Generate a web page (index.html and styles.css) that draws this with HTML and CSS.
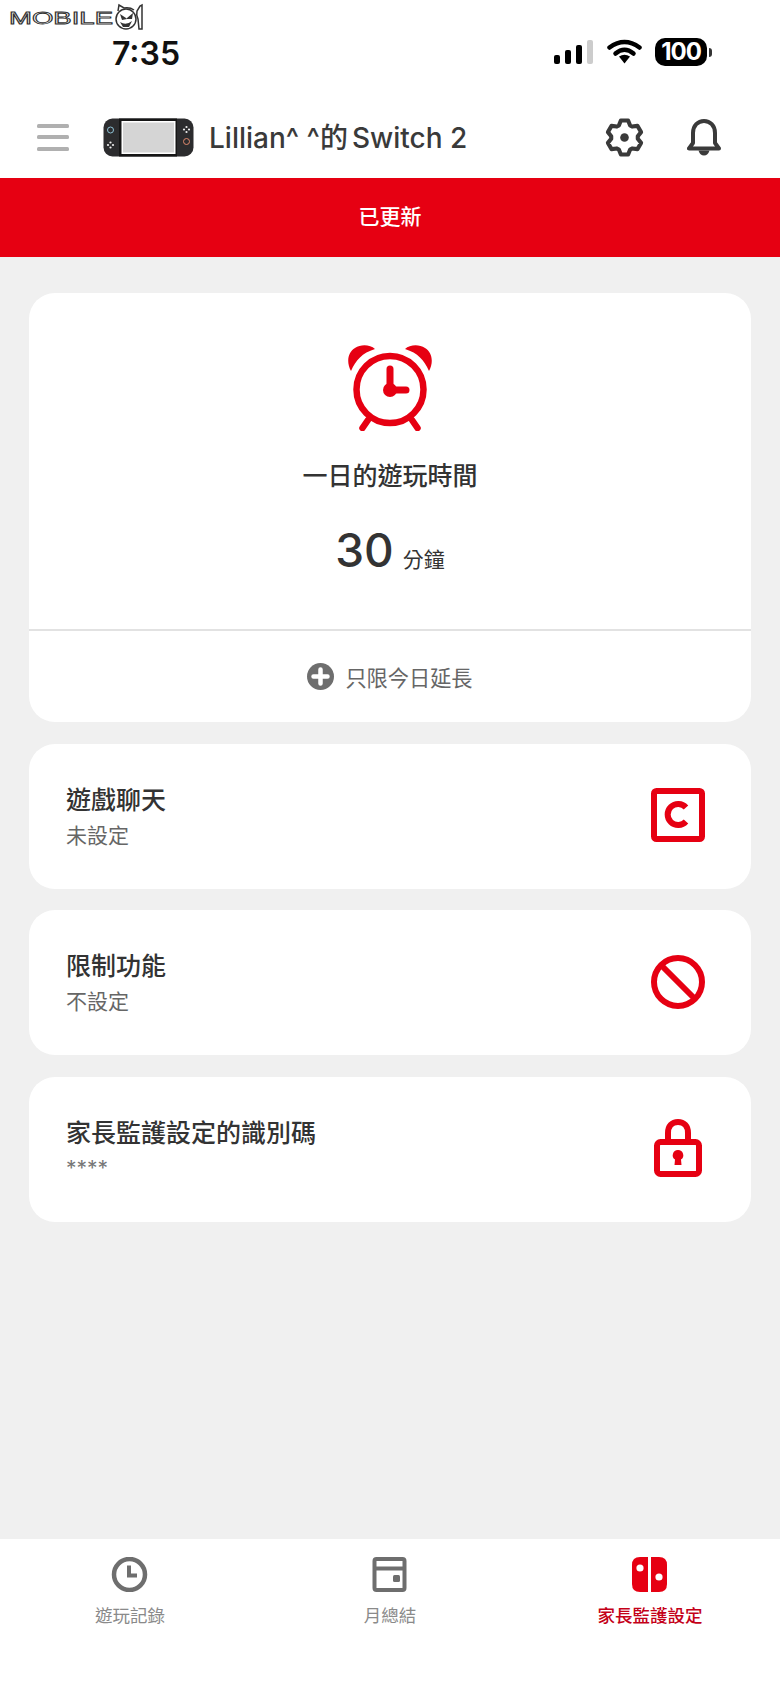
FILE: index.html
```html
<!DOCTYPE html>
<html lang="zh-Hant">
<head>
<meta charset="utf-8">
<title>家長監護設定</title>
<link rel="stylesheet" href="styles.css">
</head>
<body>
<div class="page">
  <svg class="watermark" width="146" height="32" viewBox="0 0 146 32">
    <text class="wm-text" x="9" y="24" textLength="104" lengthAdjust="spacingAndGlyphs">MOBILE</text>
    <path class="wm-line" d="M118 11l1-6 5 3q6-1 10 2M142 5v24h-3l-1-10q-2-4-1-8l3-5z"/>
    <circle class="wm-line" cx="126" cy="19" r="10"/>
    <path class="wm-face" d="M120 14l6 4 1 1-5 1zM133 13l-6 5-1 1 6 0zM120 22q6 4 12-1l-3 6h-6z"/>
  </svg>

  <div class="status">
    <span class="time">7:35</span>
    <div class="status-right">
      <div class="signal"><i class="b1"></i><i class="b2"></i><i class="b3"></i><i class="b4"></i></div>
      <svg class="wifi" width="35" height="25" viewBox="0 0 35 25">
        <path d="M2.5 8.5Q17.5-2.5 32.500 8.500" class="wifi-arc"/>
        <path d="M8.500 14.500Q17.500 7 26.500 14.500" class="wifi-arc"/>
        <path d="M12 17.500Q17.500 14 23 17.500L17.500 24.500Z" class="wifi-dot"/>
      </svg>
      <div class="battery"><span class="battery-body">100</span><span class="battery-nub"></span></div>
    </div>
  </div>

  <header class="header">
    <div class="burger"><i></i><i></i><i></i></div>
    <svg class="console" width="91" height="39" viewBox="0 0 91 39">
      <rect x="0.500" y="0.500" width="90" height="38" rx="9" fill="#2c2c2e"/>
      <rect x="16" y="0.500" width="58" height="38" fill="#161616"/>
      <rect x="18.500" y="3" width="54" height="33" fill="#fff"/>
      <rect x="20" y="4.500" width="51" height="30" fill="#d5d5d5"/>
      <circle cx="7.500" cy="12" r="3" fill="none" stroke="#8fc3d6" stroke-width="1"/>
      <circle cx="7.500" cy="24.500" r="1.100" fill="#eee"/><circle cx="7.500" cy="29.500" r="1.100" fill="#eee"/><circle cx="5" cy="27" r="1.100" fill="#eee"/><circle cx="10" cy="27" r="1.100" fill="#eee"/>
      <circle cx="83.500" cy="9" r="1.100" fill="#eee"/><circle cx="83.500" cy="14" r="1.100" fill="#eee"/><circle cx="81" cy="11.500" r="1.100" fill="#eee"/><circle cx="86" cy="11.500" r="1.100" fill="#eee"/>
      <circle cx="83.500" cy="23.500" r="3" fill="none" stroke="#e08a6e" stroke-width="1"/>
    </svg>
    <h1 class="title">Lillian^ ^的<span class="title-tail">Switch 2</span></h1>
    <svg class="gear" width="41" height="41" viewBox="0 0 40 40">
      <polygon class="gear-line" points="16.470,3.370 23.530,3.370 25.490,8.220 27.460,9.350 32.630,8.630 36.170,14.750 32.950,18.870 32.950,21.130 36.170,25.250 32.630,31.370 27.460,30.650 25.490,31.780 23.530,36.630 16.470,36.630 14.510,31.780 12.540,30.650 7.370,31.370 3.830,25.250 7.050,21.130 7.050,18.870 3.830,14.750 7.370,8.630 12.540,9.350 14.510,8.220"/>
      <circle cx="20" cy="20" r="4.200" fill="#3a3a3a"/>
    </svg>
    <svg class="bell" width="34" height="37" viewBox="0 0 34 37">
      <path class="bell-line" d="M2 29.500h30l-4-5.500V14C28 6.500 23 2 17 2S6 6.500 6 14v10z"/>
      <path d="M11.500 31.500h11Q21 36.500 17 36.500T11.500 31.500z" fill="#3a3a3a"/>
    </svg>
  </header>

  <div class="banner">已更新</div>

  <main class="main">
    <section class="card card-time">
      <div class="time-top">
        <svg class="alarm" width="86" height="86" viewBox="0 0 86 86">
          <path class="red-fill" d="M4 26C-1 17 1 7 8 3 14-1 23-.5 28 4 15 8 9 15 4 26z"/>
          <path class="red-fill" d="M82 26C87 17 85 7 78 3 72-1 63-.5 58 4 71 8 77 15 82 26z"/>
          <circle class="red-line" cx="43" cy="44.500" r="33.500" stroke-width="6.500"/>
          <path class="red-line" d="M21 75l-5.500 8M65 75l5.500 8" stroke-width="6.500" stroke-linecap="round"/>
          <path class="red-line" d="M43 24v21h16" stroke-width="7" stroke-linecap="round"/>
          <circle class="red-fill" cx="43" cy="45" r="7"/>
        </svg>
        <h2 class="time-title">一日的遊玩時間</h2>
        <div class="time-value"><span class="time-num">30</span><span class="time-unit">分鐘</span></div>
      </div>
      <div class="extend">
        <svg width="27" height="27" viewBox="0 0 27 27">
          <circle cx="13.500" cy="13.500" r="13.500" fill="#6e6e6e"/>
          <path d="M13.500 6.500v14M6.500 13.500h14" stroke="#fff" stroke-width="4.500" stroke-linecap="round"/>
        </svg>
        <span>只限今日延長</span>
      </div>
    </section>

    <section class="card row">
      <div class="row-text"><h3 class="row-title">遊戲聊天</h3><p class="row-sub">未設定</p></div>
      <svg class="row-icon" width="54" height="54" viewBox="0 0 54 54">
        <rect class="red-line" x="3" y="3" width="48" height="48" rx="2.500" stroke-width="6"/>
        <path class="red-line" d="M35 19.500A10.500 10.500 0 1 0 35 33.500" stroke-width="6"/>
      </svg>
    </section>

    <section class="card row">
      <div class="row-text"><h3 class="row-title">限制功能</h3><p class="row-sub">不設定</p></div>
      <svg class="row-icon" width="54" height="54" viewBox="0 0 54 54">
        <circle class="red-line" cx="27" cy="27" r="24" stroke-width="6"/>
        <path class="red-line" d="M10 10l34 34" stroke-width="6"/>
      </svg>
    </section>

    <section class="card row">
      <div class="row-text"><h3 class="row-title">家長監護設定的識別碼</h3><p class="row-sub row-stars">****</p></div>
      <svg class="row-icon" width="54" height="58" viewBox="0 0 54 58">
        <path class="red-line" d="M17 24V14C17 7 21 3 27 3s10 4 10 11v10" stroke-width="6"/>
        <rect class="red-line" x="6" y="23" width="42" height="32" rx="3.500" stroke-width="6"/>
        <path class="red-fill" d="M27 31a5.200 5.200 0 0 1 3 9.500l.5 5.500h-7l.5-5.500A5.200 5.200 0 0 1 27 31z"/>
      </svg>
    </section>
  </main>

  <nav class="tabs">
    <div class="tab">
      <svg width="37" height="35" viewBox="0 0 37 35">
        <circle class="grey-line" cx="18.500" cy="17.500" r="15.500" stroke-width="4.500"/>
        <path class="grey-line" d="M18 8.500v10h8" stroke-width="4"/>
      </svg>
      <span>遊玩記錄</span>
    </div>
    <div class="tab">
      <svg width="37" height="35" viewBox="0 0 37 35">
        <rect class="grey-line" x="3.500" y="2" width="30" height="31" rx="2" stroke-width="4"/>
        <path class="grey-line" d="M3.500 11.500h30" stroke-width="4"/>
        <rect x="22" y="18" width="7" height="7" rx="1.500" fill="#6e6e6e"/>
      </svg>
      <span>月總結</span>
    </div>
    <div class="tab tab-active">
      <svg width="37" height="35" viewBox="0 0 37 35">
        <path class="red-fill" d="M17 0v35H9Q1 35 1 27V8Q1 0 9 0z"/>
        <path class="red-fill" d="M20 0v35h8q8 0 8-8V8q0-8-8-8z"/>
        <circle cx="9" cy="11" r="3.600" fill="#fff"/>
        <circle cx="28" cy="20" r="3.600" fill="#fff"/>
      </svg>
      <span>家長監護設定</span>
    </div>
  </nav>
</div>
</body>
</html>
```

FILE: styles.css
```css
* { box-sizing: border-box; }
html, body { margin: 0; padding: 0; }
body {
  background: #fff;
  color: #333;
  font-family: "Inter", "Noto Sans CJK TC", sans-serif;
}
h1, h2, h3, p { margin: 0; font-weight: inherit; }

.page {
  position: relative;
  width: 780px;
  height: 1691px;
  display: flex;
  flex-direction: column;
  overflow: hidden;
}

.watermark { position: absolute; left: 0; top: 0; }
.wm-text {
  font-family: "Liberation Sans", sans-serif;
  font-size: 16px;
  font-weight: 400;
  fill: #fff;
  stroke: #333;
  stroke-width: 0.800;
}
.wm-line { fill: none; stroke: #333; stroke-width: 1.500; }
.wm-face { fill: #333; }

.status {
  height: 96px;
  flex: none;
  display: flex;
  justify-content: space-between;
  padding: 35px 68px 0 112px;
}
.time {
  font-size: 32px;
  font-weight: 600;
  line-height: 38px;
  color: #111;
}
.status-right {
  display: flex;
  align-items: flex-start;
  margin-top: 3px;
}
.signal {
  display: flex;
  align-items: flex-end;
  gap: 5px;
  height: 24px;
  margin: 2px 14px 0 0;
}
.signal i { display: block; width: 6px; border-radius: 2px; background: #000; }
.signal .b1 { height: 9px; }
.signal .b2 { height: 14px; }
.signal .b3 { height: 19px; }
.signal .b4 { height: 24px; background: #ccc; }
.wifi { margin: 1px 13px 0 0; }
.wifi-arc { fill: none; stroke: #000; stroke-width: 4.500; stroke-linecap: round; }
.wifi-dot { fill: #000; }
.battery { display: flex; align-items: center; height: 28px; }
.battery-body {
  width: 52px;
  height: 28px;
  border-radius: 10px;
  background: #000;
  color: #fff;
  font-size: 24px;
  font-weight: 700;
  letter-spacing: -1px;
  line-height: 28px;
  text-align: center;
}
.battery-nub {
  width: 3px;
  height: 9px;
  margin-left: 2px;
  border-radius: 0 3px 3px 0;
  background: #333;
}

.header {
  height: 82px;
  flex: none;
  display: flex;
  align-items: center;
  padding: 0 59px 0 37px;
}
.burger { display: flex; flex-direction: column; gap: 7.500px; width: 32px; }
.burger i { display: block; height: 4px; border-radius: 1.500px; background: #b0b0b0; }
.console { margin-left: 34px; flex: none; }
.title {
  margin: 0 0 3px 15px;
  flex: 1;
  font-size: 28px;
  font-weight: 500;
  color: #3a3a3a;
  white-space: nowrap;
}
.title-tail { margin-left: 4px; }
.gear { margin-right: 42px; }
.gear-line { fill: none; stroke: #3a3a3a; stroke-width: 4; stroke-linejoin: round; }
.bell-line { fill: none; stroke: #3a3a3a; stroke-width: 4; stroke-linejoin: round; }

.banner {
  height: 79px;
  flex: none;
  background: #e60012;
  color: #fff;
  display: flex;
  align-items: center;
  justify-content: center;
  padding-bottom: 5px;
  font-size: 21px;
  font-weight: 500;
}

.main {
  flex: 1;
  background: #f0f0f0;
  padding: 36px 29px 0;
  display: flex;
  flex-direction: column;
  gap: 21.500px;
}
.card { background: #fff; border-radius: 26px; }
.card-time { height: 429px; display: flex; flex-direction: column; }
.time-top {
  height: 338px;
  flex: none;
  display: flex;
  flex-direction: column;
  align-items: center;
  padding-top: 52px;
  border-bottom: 2px solid #e2e2e2;
}
.time-title {
  margin-top: 27px;
  font-size: 25px;
  font-weight: 500;
  line-height: 36px;
  color: #333;
}
.time-value {
  margin-top: 28px;
  display: flex;
  align-items: baseline;
  gap: 9px;
  color: #333;
}
.time-num { font-size: 46px; font-weight: 500; line-height: 56px; }
.time-unit { font-size: 21px; line-height: 30px; }
.extend {
  flex: 1;
  display: flex;
  align-items: center;
  justify-content: center;
  gap: 11px;
  padding-bottom: 1px;
  font-size: 21.200px;
  color: #666;
}

.row {
  height: 145px;
  display: flex;
  justify-content: space-between;
  align-items: center;
  padding: 0 46px 2px 37px;
}
.row-text { align-self: flex-start; padding-top: 38px; }
.row-title { font-size: 25px; font-weight: 500; line-height: 36px; color: #333; }
.row-sub { margin-top: 1px; font-size: 21px; line-height: 34px; color: #666; }
.row-stars { font-size: 21px; color: #777; }
.row-icon { flex: none; }

.red-fill { fill: #e60012; }
.red-line { fill: none; stroke: #e60012; }
.grey-line { fill: none; stroke: #6e6e6e; }

.tabs {
  height: 152px;
  flex: none;
  display: grid;
  grid-template-columns: repeat(3, 1fr);
  padding-top: 18px;
  background: #fff;
  align-items: start;
}
.tab {
  display: flex;
  flex-direction: column;
  align-items: center;
  gap: 12px;
  font-size: 17.500px;
  line-height: 24px;
  color: #8a8a8a;
}
.tab svg { margin-left: -2px; }
.tab-active { color: #c40018; font-weight: 500; }
```
